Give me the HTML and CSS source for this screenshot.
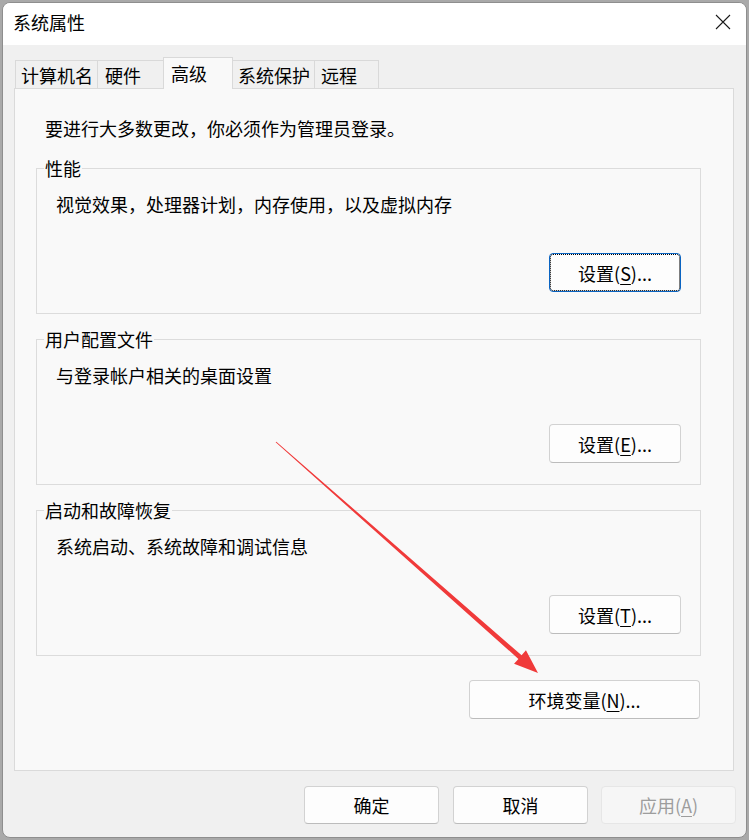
FILE: index.html
```html
<!DOCTYPE html>
<html lang="zh-CN">
<head>
<meta charset="utf-8">
<title>系统属性</title>
<link rel="stylesheet" href="styles.css">
</head>
<body>
<div class="window">
  <div class="titlebar">
    <span class="title">系统属性</span>
    <svg class="close" width="16" height="16" viewBox="0 0 16 16" aria-label="关闭">
      <path d="M1 1 L15 15 M15 1 L1 15" stroke="#1b1b1b" stroke-width="1.1" fill="none"/>
    </svg>
  </div>
  <div class="content">
    <div class="tabs">
      <div class="tab t1">计算机名</div>
      <div class="tab t2">硬件</div>
      <div class="tab t3 active">高级</div>
      <div class="tab t4">系统保护</div>
      <div class="tab t5">远程</div>
    </div>
    <div class="panel">
      <p class="intro">要进行大多数更改，你必须作为管理员登录。</p>
      <fieldset class="group">
        <legend>性能</legend>
        <div class="group-body">
          <p class="desc">视觉效果，处理器计划，内存使用，以及虚拟内存</p>
          <div class="group-actions"><button class="btn btn-set focused">设置(<u>S</u>)...</button></div>
        </div>
      </fieldset>
      <fieldset class="group">
        <legend>用户配置文件</legend>
        <div class="group-body">
          <p class="desc">与登录帐户相关的桌面设置</p>
          <div class="group-actions"><button class="btn btn-set">设置(<u>E</u>)...</button></div>
        </div>
      </fieldset>
      <fieldset class="group">
        <legend>启动和故障恢复</legend>
        <div class="group-body">
          <p class="desc">系统启动、系统故障和调试信息</p>
          <div class="group-actions"><button class="btn btn-set">设置(<u>T</u>)...</button></div>
        </div>
      </fieldset>
      <div class="env-row"><button class="btn btn-env">环境变量(<u>N</u>)...</button></div>
    </div>
    <div class="dialog-buttons">
      <button class="btn btn-dlg">确定</button>
      <button class="btn btn-dlg">取消</button>
      <button class="btn btn-dlg disabled" disabled>应用(<u>A</u>)</button>
    </div>
  </div>
</div>
<svg class="arrow" width="749" height="840" viewBox="0 0 749 840">
  <polygon fill="#f03a3a" points="276.33,441.63 521.6,655.3 525.95,650.35 538,673 514.05,663.85 518.4,658.9 275.67,442.37"/>
</svg>
</body>
</html>
```
FILE: styles.css
```css
* { box-sizing: border-box; }
html, body { margin: 0; padding: 0; }
body {
  width: 749px;
  height: 840px;
  overflow: hidden;
  background: #a9a9a9;
  padding: 2px 0 0 2px;
  font-family: "Noto Sans CJK SC", "Noto Sans", sans-serif;
  font-size: 18px;
  color: #000;
}
.window {
  width: 745px;
  height: 836px;
  border: 1px solid #8e8e8e;
  border-radius: 8px;
  background: #f0f0f0;
  overflow: hidden;
  display: flex;
  flex-direction: column;
}
.titlebar {
  height: 42px;
  flex: none;
  background: #ffffff;
  display: flex;
  align-items: center;
  justify-content: space-between;
  padding: 0 15px 4px 10px;
}
.title { line-height: 24px; }
.close { display: block; }
.content {
  padding: 12px 0 0 11px;
}
.tabs {
  display: flex;
  align-items: flex-end;
  margin-left: 1px;
  margin-bottom: -1px;
  position: relative;
  z-index: 1;
}
.tab {
  height: 28px;
  margin-bottom: 1px;
  border: 1px solid #d9d9d9;
  border-bottom: none;
  background: #f0f0f0;
  display: flex;
  align-items: center;
  padding-left: 5px;
  line-height: 22px;
  white-space: nowrap;
}
.tab + .tab { margin-left: -1px; }
.t1 { width: 83px; }
.t2 { width: 67px; padding-left: 7px; }
.t3 { width: 70px; padding-left: 7px; }
.t4 { width: 83px; }
.t5 { width: 65px; padding-left: 6px; }
.tab.active {
  height: 32px;
  margin-bottom: 0;
  background: #f9f9f9;
  position: relative;
  z-index: 2;
  padding-bottom: 2px;
}
.panel {
  width: 720px;
  height: 683px;
  border: 1px solid #dadada;
  background: #f9f9f9;
  padding: 27px 32px 0 21px;
}
.intro {
  margin: 0 0 0 9px;
  line-height: 24px;
}
.group {
  margin: 18px 0 0 0;
  padding: 0;
  min-width: 0;
  border: 1px solid #dcdcdc;
}
.group + .group { margin-top: 15px; }
.group legend {
  margin-left: 7px;
  padding: 0 1px;
  line-height: 20px;
}
.group-body {
  padding: 14px 19px 21px 19px;
}
.desc {
  margin: 0;
  line-height: 24px;
}
.group-actions {
  margin-top: 37px;
  display: flex;
  justify-content: flex-end;
}
.btn {
  font-family: inherit;
  font-size: 18px;
  color: #000;
  background: #fdfdfd;
  border: 1px solid #d2d2d2;
  border-bottom-color: #bcbcbc;
  border-radius: 4px;
  padding: 0;
  line-height: 22px;
  display: flex;
  align-items: center;
  justify-content: center;
}
.btn u { text-underline-offset: 3px; text-decoration-thickness: 1px; }
.btn-set { width: 132px; height: 39px; }
.btn.focused {
  border: 1px solid #0a64c2;
  outline: 1px dotted #000;
  outline-offset: -2px;
}
.env-row {
  margin-top: 24px;
  display: flex;
  justify-content: flex-end;
  padding-right: 1px;
}
.btn-env { width: 231px; height: 39px; }
.dialog-buttons {
  width: 722px;
  margin-top: 15px;
  display: flex;
  justify-content: flex-end;
  gap: 14px;
}
.btn-dlg { width: 135px; height: 38px; }
.btn-dlg:nth-child(3) { margin-left: -1px; }
.btn.disabled {
  background: #f6f6f6;
  border-color: #e6e6e6;
  color: #9d9d9d;
}
.arrow {
  position: absolute;
  left: 0;
  top: 0;
  pointer-events: none;
}
```
